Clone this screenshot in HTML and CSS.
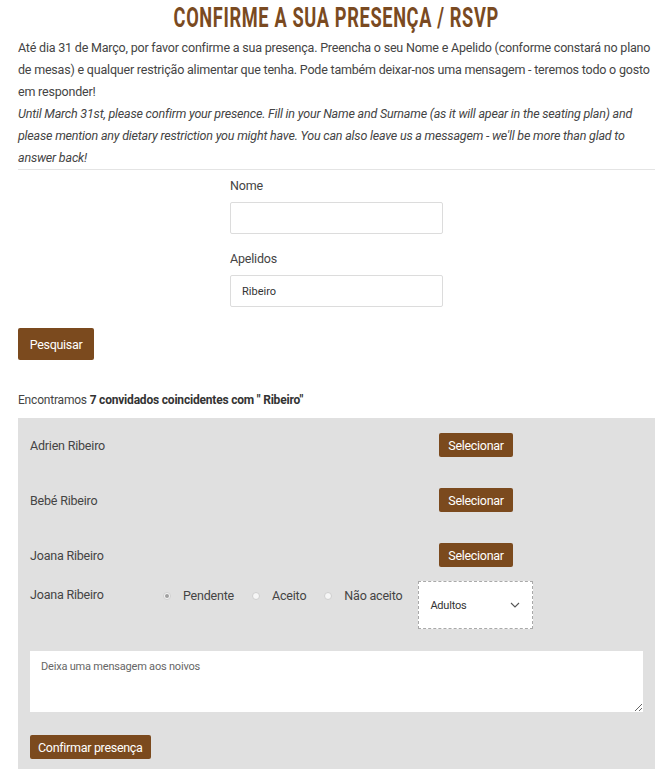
FILE: index.html
```html
<!DOCTYPE html>
<html lang="pt">
<head>
<meta charset="utf-8">
<title>RSVP</title>
<link rel="stylesheet" href="styles.css">
</head>
<body>
<div class="page">
  <h1 class="title"><span class="title-text">CONFIRME A SUA PRESENÇA / RSVP</span></h1>
  <p class="intro">Até dia 31 de Março, por favor confirme a sua presença. Preencha o seu Nome e Apelido (conforme constará no plano de mesas) e qualquer restrição alimentar que tenha. Pode também deixar-nos uma mensagem - teremos todo o gosto em responder!</p>
  <p class="intro intro-en">Until March 31st, please confirm your presence. Fill in your Name and Surname (as it will apear in the seating plan) and please mention any dietary restriction you might have. You can also leave us a messagem - we'll be more than glad to answer back!</p>
  <hr class="divider">
  <form class="search">
    <div class="field">
      <label class="label">Nome</label>
      <input class="input" type="text" value="">
    </div>
    <div class="field">
      <label class="label">Apelidos</label>
      <input class="input" type="text" value="Ribeiro">
    </div>
  </form>
  <button class="btn btn-search" type="button">Pesquisar</button>
  <p class="found">Encontramos <b>7 convidados coincidentes com " Ribeiro"</b></p>
  <div class="panel">
    <div class="guest">
      <span class="guest-name">Adrien Ribeiro</span>
      <button class="btn btn-select" type="button">Selecionar</button>
    </div>
    <div class="guest">
      <span class="guest-name">Bebé Ribeiro</span>
      <button class="btn btn-select" type="button">Selecionar</button>
    </div>
    <div class="guest">
      <span class="guest-name">Joana Ribeiro</span>
      <button class="btn btn-select" type="button">Selecionar</button>
    </div>
    <div class="guest guest-active">
      <span class="guest-name">Joana Ribeiro</span>
      <div class="radios">
        <label class="radio"><span class="dot checked"></span>Pendente</label>
        <label class="radio"><span class="dot"></span>Aceito</label>
        <label class="radio"><span class="dot"></span>Não aceito</label>
      </div>
      <div class="select">
        <span>Adultos</span>
        <svg class="chev" width="10" height="6" viewBox="0 0 10 6"><path d="M1 1l4 4 4-4" fill="none" stroke="#555" stroke-width="1.1"/></svg>
      </div>
    </div>
    <textarea class="message" placeholder="Deixa uma mensagem aos noivos"></textarea>
    <button class="btn btn-confirm" type="button">Confirmar presença</button>
  </div>
</div>
</body>
</html>
```

FILE: styles.css
```css
* { box-sizing: border-box; }
html, body { margin: 0; padding: 0; background: #fff; }
body {
  font-family: Roboto, "Liberation Sans", Arial, sans-serif;
  font-size: 12.5px;
  letter-spacing: -0.2px;
  color: #444;
}
.page {
  padding: 4px 14px 0 18px;
}
.title {
  margin: 0;
  text-align: center;
  font-family: Roboto, "Liberation Sans", sans-serif;
  font-weight: 700;
  font-size: 28px;
  line-height: 28px;
  letter-spacing: 1px;
  color: #7a4a21;
  white-space: nowrap;
}
.title-text {
  display: inline-block;
  transform: scaleX(0.65);
}
.intro {
  margin: 5px 0 0;
  line-height: 22px;
}
.intro-en {
  margin-top: 0;
  font-style: italic;
}
.divider {
  margin: 0;
  border: 0;
  border-top: 1px solid #e4e4e4;
}
.search {
  display: flex;
  flex-direction: column;
  align-items: center;
  padding-top: 6px;
}
.field {
  width: 213px;
  display: flex;
  flex-direction: column;
  margin-bottom: 15px;
}
.field:last-child { margin-bottom: 0; }
.label {
  line-height: 20px;
  margin-bottom: 6px;
}
.input {
  height: 32px;
  border: 1px solid #dcdcdc;
  border-radius: 2px;
  padding: 0 11px;
  font-family: Roboto, sans-serif;
  font-size: 11px;
  color: #333;
  background: #fff;
}
.btn {
  display: block;
  border: 0;
  background: #7b4a1e;
  color: #fff;
  font-family: Roboto, sans-serif;
  font-size: 12.5px;
  letter-spacing: -0.3px;
  border-radius: 2px;
  padding: 0 10px;
  cursor: pointer;
}
.btn-search {
  height: 32px;
  width: 76px;
  margin-top: 21px;
}
.found {
  margin: 32px 0 0;
  line-height: 16px;
  font-size: 12px;
}
.found b { font-weight: 700; color: #333; }
.panel {
  margin-top: 10px;
  background: #e0e0e0;
  padding: 15px 12px 20px;
  min-height: 360px;
}
.guest {
  display: flex;
  align-items: center;
  height: 24px;
  margin-bottom: 31px;
}
.guest-name {
  width: 409px;
  flex: none;
}
.btn-select {
  height: 24px;
  width: 74px;
  padding: 0;
}
.guest-active {
  align-items: flex-start;
  height: auto;
  margin-top: -17px;
  margin-bottom: 0;
}
.guest-active .guest-name {
  width: 133px;
  line-height: 20px;
  padding-top: 4px;
}
.radios {
  display: flex;
  padding-top: 5px;
}
.radio {
  display: flex;
  align-items: center;
  line-height: 20px;
  margin-right: 18px;
}
.radio:last-child { margin-right: 16px; }
.dot {
  width: 8px;
  height: 8px;
  border-radius: 50%;
  border: 1px solid #cfcfcf;
  background: #f6f6f6;
  margin-right: 12px;
  position: relative;
}
.dot.checked::after {
  content: "";
  position: absolute;
  left: 1px;
  top: 1px;
  width: 4px;
  height: 4px;
  border-radius: 50%;
  background: #a0a0a0;
}
.select {
  width: 115px;
  height: 48px;
  background: #fff;
  border: 1px dashed #a9a9a9;
  display: flex;
  align-items: center;
  justify-content: space-between;
  padding: 0 12px 0 11px;
  font-size: 11px;
  color: #333;
}
.message {
  display: block;
  width: 613px;
  height: 61px;
  margin-top: 22px;
  border: 0;
  background: #fff;
  padding: 9px 11px;
  font-family: Roboto, sans-serif;
  font-size: 11px;
  letter-spacing: -0.2px;
  resize: vertical;
}
.message::placeholder { color: #666; }
.btn-confirm {
  margin-top: 23px;
  height: 24px;
  padding: 0 8px;
}
```
